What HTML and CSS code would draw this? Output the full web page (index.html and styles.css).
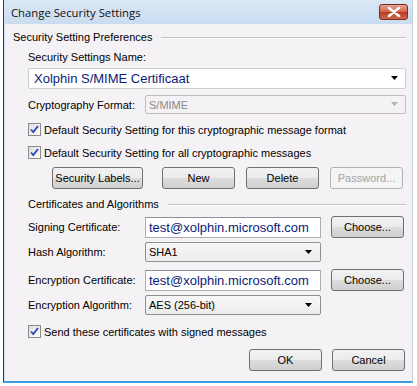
FILE: index.html
```html
<!DOCTYPE html>
<html>
<head>
<meta charset="utf-8">
<link rel="stylesheet" href="styles.css">
</head>
<body>
<div class="window">
  <div class="titlebar">
    <span class="title">Change Security Settings</span>
    <div class="close"><svg width="14" height="10" viewBox="0 0 14 10"><path d="M2 1 L12 9 M12 1 L2 9" stroke="#fff" stroke-width="2.6" stroke-linecap="round"/></svg></div>
  </div>
  <div class="content">
    <div class="group-head head1"><span>Security Setting Preferences</span><div class="rule"></div></div>
    <div class="indent">
      <div class="label name-label">Security Settings Name:</div>
      <div class="combo big">
        <span>Xolphin S/MIME Certificaat</span>
        <svg class="arrow" width="8" height="5" viewBox="0 0 8 5"><path d="M0 0 H7 L3.5 4 Z" fill="#000"/></svg>
      </div>
      <div class="row crypto-row">
        <span class="label fixed">Cryptography Format:</span>
        <div class="combo disabled grow">
          <span>S/MIME</span>
          <svg class="arrow" width="8" height="5" viewBox="0 0 8 5"><path d="M0 0 H7 L3.5 4 Z" fill="#b4b4b4"/></svg>
        </div>
      </div>
      <div class="check chk1"><span class="box"><svg width="11" height="11" viewBox="0 0 11 11"><path d="M2 5.5 L4.3 8 L9 2" stroke="#2a47b8" stroke-width="1.8" fill="none"/></svg></span><span>Default Security Setting for this cryptographic message format</span></div>
      <div class="check chk2"><span class="box"><svg width="11" height="11" viewBox="0 0 11 11"><path d="M2 5.5 L4.3 8 L9 2" stroke="#2a47b8" stroke-width="1.8" fill="none"/></svg></span><span>Default Security Setting for all cryptographic messages</span></div>
      <div class="btn-row">
        <div class="btn w91">Security Labels...</div>
        <div class="btn">New</div>
        <div class="btn">Delete</div>
        <div class="btn disabled-btn">Password...</div>
      </div>
    </div>
    <div class="group-head head2 indent"><span>Certificates and Algorithms</span><div class="rule"></div></div>
    <div class="indent">
      <div class="row r-sign">
        <span class="label fixed">Signing Certificate:</span>
        <div class="field">test@xolphin.microsoft.com</div>
        <div class="btn">Choose...</div>
      </div>
      <div class="row r-hash">
        <span class="label fixed">Hash Algorithm:</span>
        <div class="combo small"><span>SHA1</span><svg class="arrow" width="8" height="5" viewBox="0 0 8 5"><path d="M0 0 H7 L3.5 4 Z" fill="#000"/></svg></div>
      </div>
      <div class="row r-enc">
        <span class="label fixed">Encryption Certificate:</span>
        <div class="field">test@xolphin.microsoft.com</div>
        <div class="btn">Choose...</div>
      </div>
      <div class="row r-alg">
        <span class="label fixed">Encryption Algorithm:</span>
        <div class="combo small"><span>AES (256-bit)</span><svg class="arrow" width="8" height="5" viewBox="0 0 8 5"><path d="M0 0 H7 L3.5 4 Z" fill="#000"/></svg></div>
      </div>
      <div class="check chk3"><span class="box"><svg width="11" height="11" viewBox="0 0 11 11"><path d="M2 5.5 L4.3 8 L9 2" stroke="#2a47b8" stroke-width="1.8" fill="none"/></svg></span><span>Send these certificates with signed messages</span></div>
    </div>
    <div class="footer">
      <div class="btn">OK</div>
      <div class="btn">Cancel</div>
    </div>
  </div>
</div>
</body>
</html>
```
FILE: styles.css
```css
html, body {
  margin: 0;
  padding: 0;
  background: #ffffff;
}
body {
  font-family: "Liberation Sans", Arial, sans-serif;
  font-size: 11px;
  color: #000;
}
.window {
  margin-left: 3px;
  width: 408px;
  height: 381px;
  border-left: 1px solid #3a3a3a;
  border-right: 1px solid #c8d2dc;
  border-bottom: 2px solid #3d9ee0;
  background: #f5f2f5;
  box-sizing: content-box;
  display: flex;
  flex-direction: column;
}
.titlebar {
  height: 24px;
  background: linear-gradient(#dbe8f5, #c9dcf0);
  display: flex;
  align-items: center;
  justify-content: space-between;
  padding-left: 7px;
  padding-right: 4px;
  box-sizing: border-box;
}
.title {
  font-family: "Open Sans", "Noto Sans", sans-serif;
  font-size: 11.3px;
  color: #111;
  margin-top: 1px;
}
.close {
  width: 29px;
  height: 16px;
  margin-top: -1px;
  border: 1px solid #7a2a22;
  border-radius: 3px;
  background: linear-gradient(#e8a493, #d2604a 50%, #b83a24 51%, #cf6a4c);
  box-sizing: border-box;
  display: flex;
  align-items: center;
  justify-content: center;
}
.content {
  flex: 1;
  padding: 0 6px 0 8px;
  box-sizing: border-box;
  border-left: 1px solid #cfe0f2;
}
.group-head {
  display: flex;
  align-items: center;
  height: 14px;
  line-height: 14px;
}
.group-head .rule {
  flex: 1;
  height: 0;
  border-top: 1px solid #c4c0c4;
  border-bottom: 1px solid #ffffff;
  margin-left: 9px;
  margin-top: 1px;
}
.head1 { margin-top: 6px; }
.head2 { margin-top: 8px; }
.indent { padding-left: 15px; }
.group-head.indent { padding-left: 15px; }
.label { line-height: 14px; }
.name-label { margin-top: 6px; }
.combo {
  display: flex;
  align-items: center;
  justify-content: space-between;
  background: #fff;
  border: 1px solid #cdcdcd;
  border-radius: 2px;
  box-sizing: border-box;
  padding: 0 6px 0 5px;
}
.combo.big {
  height: 21px;
  margin-top: 4px;
  font-size: 13px;
  color: #0a1c7a;
}
.combo.disabled {
  height: 19px;
  color: #8a8a8a;
  background: #f5f2f5;
  border-color: #c0bcc0;
  padding-left: 3px;
}
.combo.small {
  width: 176px;
  height: 20px;
  border-color: #8e8f8f;
  padding-left: 3px;
  padding-right: 7px;
  background: linear-gradient(#f7f7f7, #ececec);
}
.row {
  display: flex;
  align-items: center;
}
.fixed { width: 117px; flex: none; }
.grow { flex: 1; }
.crypto-row { margin-top: 6px; }
.check {
  display: flex;
  align-items: center;
  height: 15px;
}
.box {
  width: 13px;
  height: 13px;
  border: 1px solid #8c8c8c;
  box-sizing: border-box;
  background: linear-gradient(135deg, #dcdcdc, #ffffff);
  display: flex;
  align-items: center;
  justify-content: center;
  margin-right: 3px;
}
.chk1 { margin-top: 8px; }
.chk2 { margin-top: 8px; }
.btn-row {
  display: flex;
  gap: 11px;
  margin-top: 7px;
  padding-left: 24px;
}
.btn {
  width: 73px;
  height: 22px;
  border: 1px solid #707070;
  border-radius: 3px;
  box-sizing: border-box;
  background: linear-gradient(#f2f2f2, #ebebeb 50%, #dddddd 51%, #cfcfcf);
  display: flex;
  align-items: center;
  justify-content: center;
  color: #000;
  flex: none;
}
.btn.w91 { width: 91px; }
.btn-row .btn:nth-child(2) { margin-left: 8px; }
.disabled-btn {
  border-color: #b5b2b5;
  background: #f4f4f4;
  color: #a3a3a3;
}
.field {
  width: 176px;
  height: 21px;
  border: 1px solid #abadb3;
  border-top-color: #8e9096;
  background: #fff;
  box-sizing: border-box;
  font-size: 13px;
  color: #0a1c7a;
  padding-left: 3px;
  line-height: 19px;
  margin-right: 10px;
  white-space: nowrap;
  overflow: hidden;
}
.r-sign { margin-top: 5px; }
.r-hash { margin-top: 4px; }
.r-enc { margin-top: 7px; }
.r-alg { margin-top: 4px; }
.chk3 { margin-top: 9px; }
.footer {
  display: flex;
  justify-content: flex-end;
  gap: 10px;
  margin-top: 10px;
  padding-right: 1px;
}
```
